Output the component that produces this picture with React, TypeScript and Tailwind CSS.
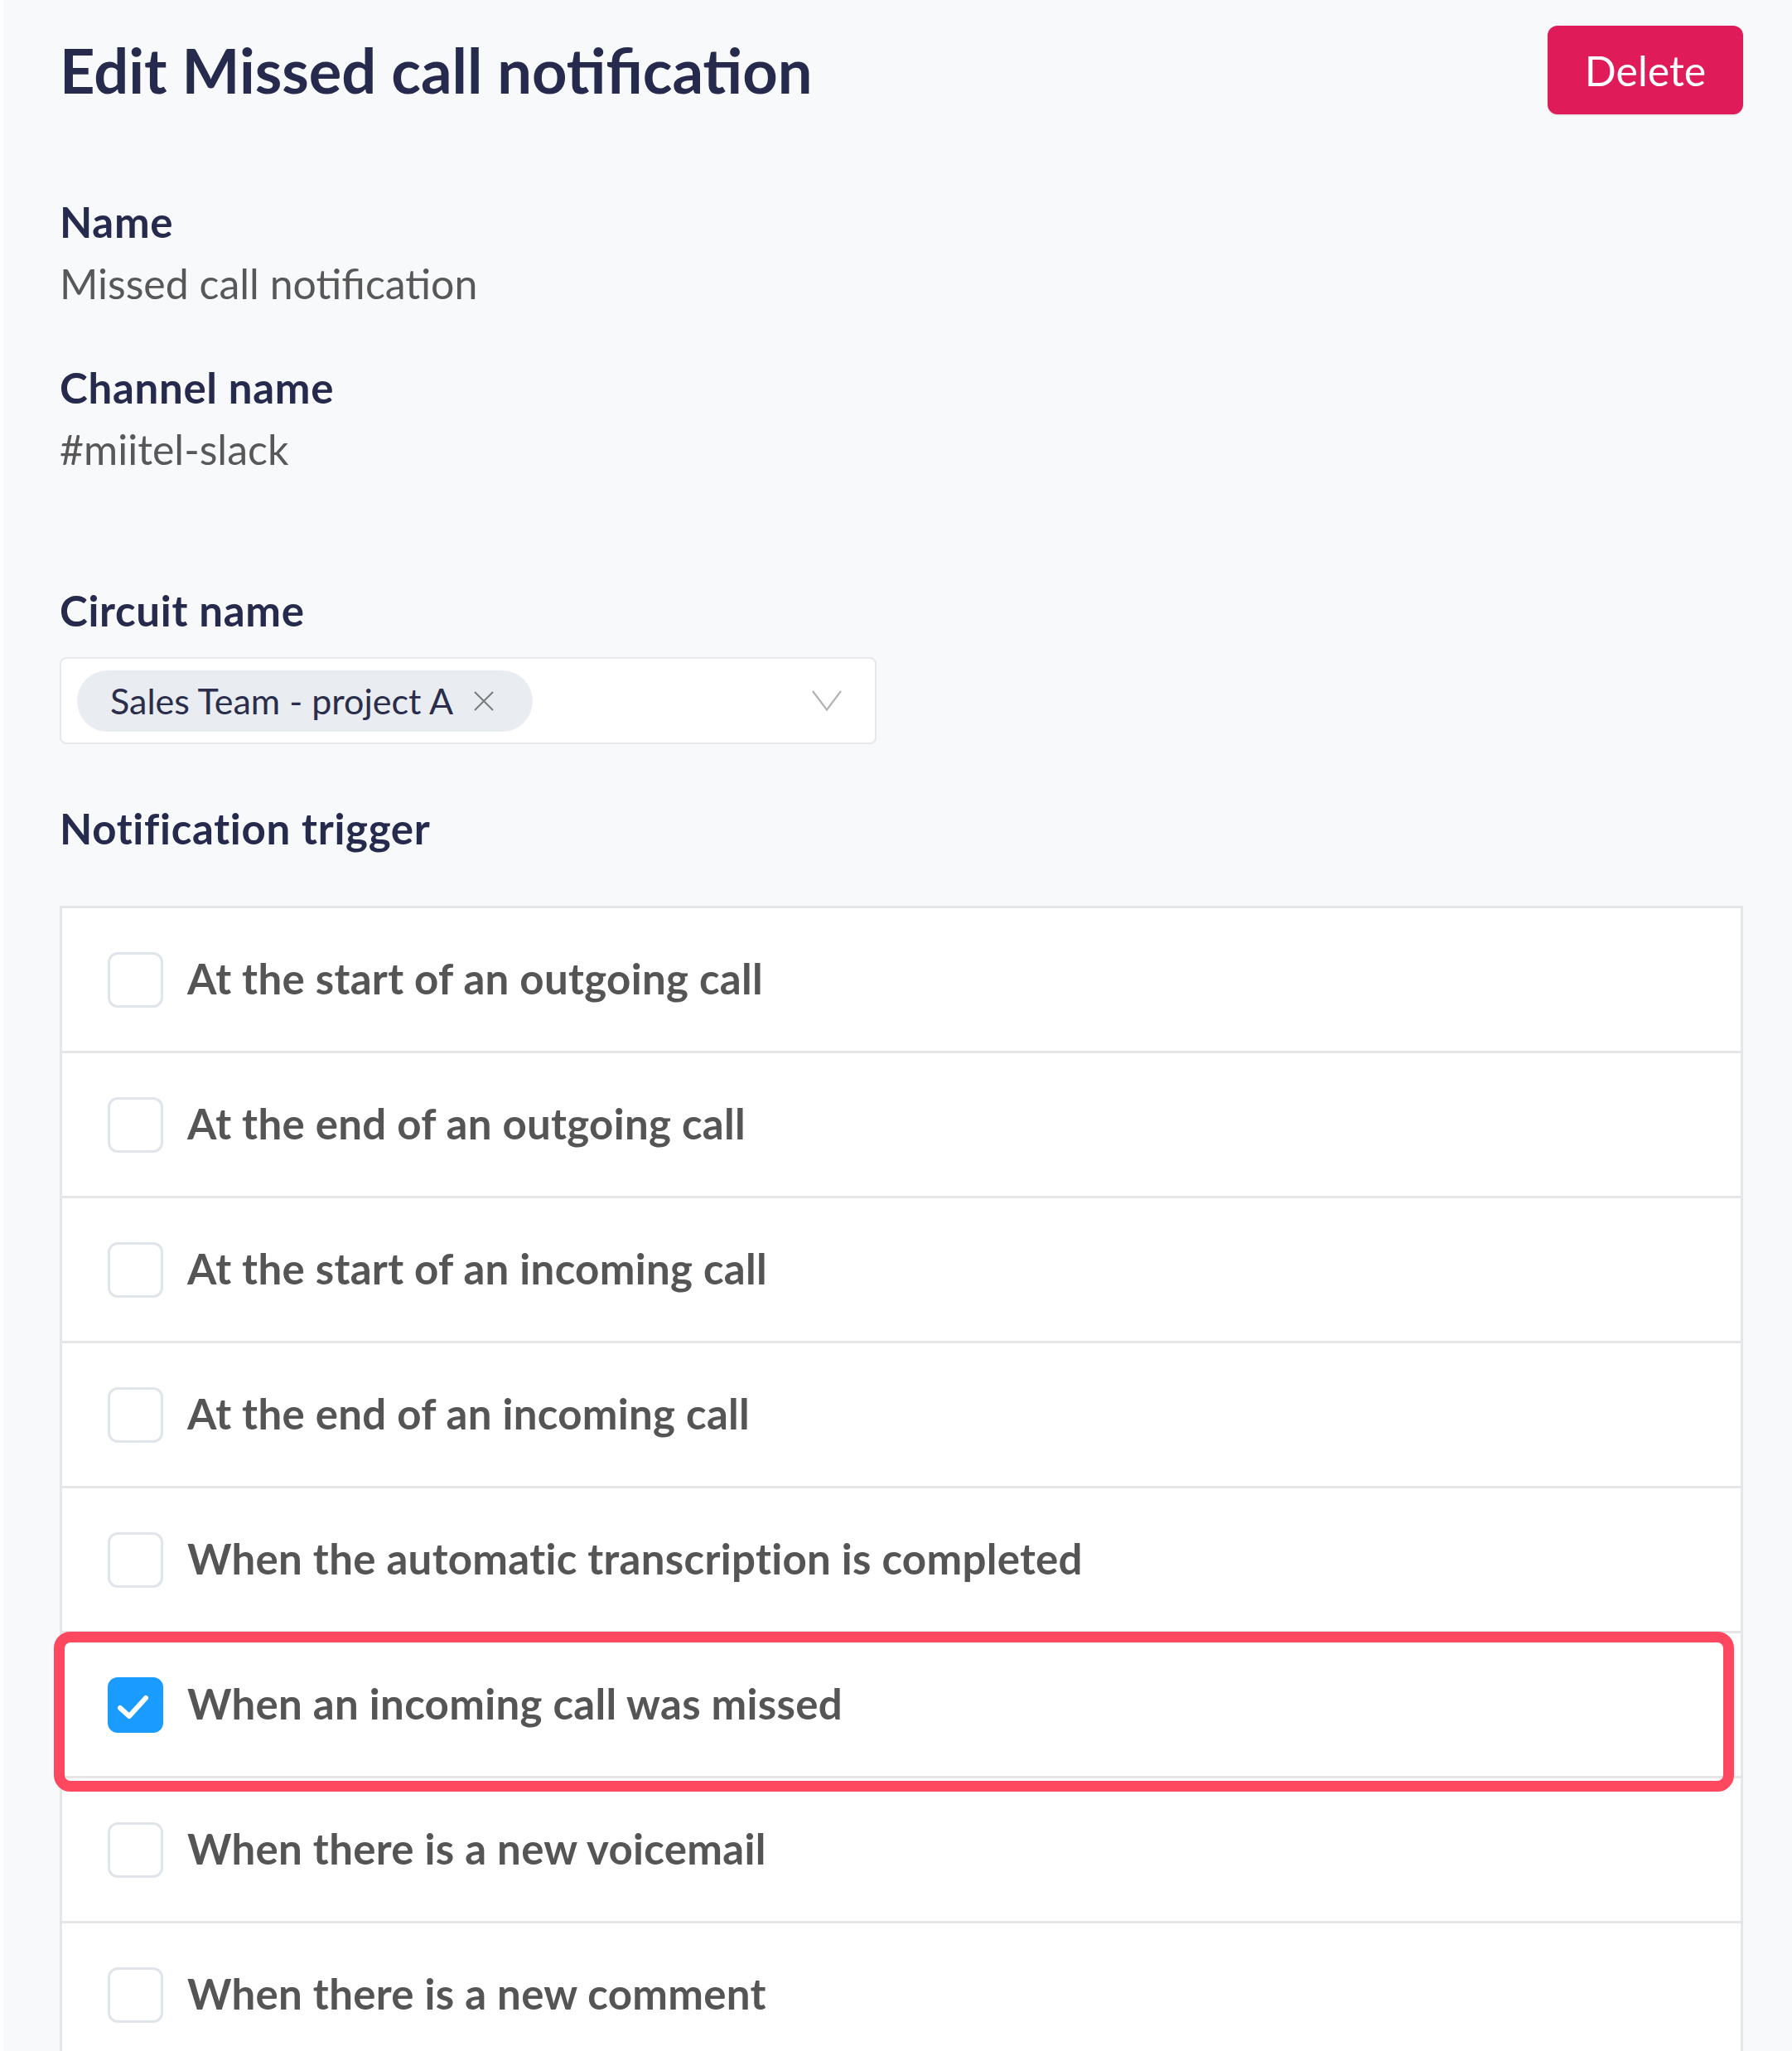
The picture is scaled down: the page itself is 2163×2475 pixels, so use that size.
import { useState } from 'react'

const triggers = [
    'At the start of an outgoing call',
    'At the end of an outgoing call',
    'At the start of an incoming call',
    'At the end of an incoming call',
    'When the automatic transcription is completed',
    'When an incoming call was missed',
    'When there is a new voicemail',
    'When there is a new comment',
]

export default function App() {
    const [checked, setChecked] = useState<number[]>([5])

    const toggle = (i: number) =>
        setChecked((prev) => (prev.includes(i) ? prev.filter((x) => x !== i) : [...prev, i]))

    return (
        <div className="min-h-[2475px] bg-[#f8f9fb] border-l-4 border-white pl-[68px] pr-[59px] pt-[31px] font-['Lato',sans-serif] overflow-hidden">
            {/* HEADER */}
            <div className="flex items-center justify-between h-[107px]">
                <h1 className="text-[74px] font-bold text-[#262a4c] leading-none">
                    Edit Missed call notification
                </h1>
                <button className="w-[236px] h-[107px] rounded-[12px] bg-[#e01b5a] text-white text-[50px] leading-none shadow-sm">
                    Delete
                </button>
            </div>

            {/* NAME */}
            <Label className="mt-[104px]">Name</Label>
            <Value>Missed call notification</Value>

            <Label className="mt-[75px]">Channel name</Label>
            <Value>#miitel-slack</Value>

            {/* CIRCUIT */}
            <Label className="mt-[144px]">Circuit name</Label>
            <div className="mt-[32px] w-[986px] h-[105px] bg-white border-2 border-[#e6e8ec] rounded-[8px] flex items-center justify-between pl-[19px] pr-[40px]">
                <div className="h-[74px] rounded-full bg-[#e9edf2] flex items-center pl-[40px] pr-[47px] gap-[25px]">
                    <span className="text-[43px] text-[#2b2e4a] leading-none">Sales Team - project A</span>
                    <svg width="24" height="24" viewBox="0 0 24 24" className="shrink-0">
                        <path d="M1 1 L23 23 M23 1 L1 23" stroke="#7a7a7a" strokeWidth="2" fill="none" />
                    </svg>
                </div>
                <svg width="36" height="25" viewBox="0 0 36 25" className="shrink-0">
                    <polyline points="1,1 18,23.5 35,1" stroke="#b3b3b3" strokeWidth="2.2" fill="none" />
                </svg>
            </div>

            <Label className="mt-[76px]">Notification trigger</Label>

            {/* TRIGGERS */}
            <div className="relative mt-[69px] bg-white border-[3px] border-[#e6e6e6] border-b-0">
                {triggers.map((t, i) => (
                    <div
                        key={t}
                        onClick={() => toggle(i)}
                        className="h-[175px] flex items-center pl-[55px] gap-[29px] border-b-[3px] border-[#e6e6e6] cursor-pointer"
                    >
                        <CheckBox on={checked.includes(i)} />
                        <span className="text-[51px] font-bold text-[#555555] leading-none tracking-[0.3px] -mt-[3px]">
                            {t}
                        </span>
                    </div>
                ))}

                {/* resaltado */}
                <div className="absolute left-[-10px] top-[873px] w-[2028px] h-[193px] border-[13px] border-[#fe4860] rounded-[20px] pointer-events-none" />
            </div>
        </div>
    )
}

function Label({ children, className = '' }: { children: React.ReactNode; className?: string }) {
    return (
        <div className={`h-[50px] flex items-center text-[51px] font-bold text-[#262a4c] leading-none tracking-[0.7px] ${className}`}>
            {children}
        </div>
    )
}

function Value({ children }: { children: React.ReactNode }) {
    return (
        <div className="mt-[25px] h-[50px] flex items-center text-[50px] text-[#585858] leading-none">
            {children}
        </div>
    )
}

function CheckBox({ on }: { on: boolean }) {
    if (on) {
        return (
            <div className="w-[67px] h-[67px] shrink-0 rounded-[12px] bg-[#1a9bff] flex items-center justify-center">
                <svg width="67" height="67" viewBox="0 0 67 67">
                    <polyline points="15,37 26,47 46,25" stroke="white" strokeWidth="6" fill="none" strokeLinecap="round" strokeLinejoin="round" />
                </svg>
            </div>
        )
    }
    return <div className="w-[67px] h-[67px] shrink-0 rounded-[12px] border-[3px] border-[#e0e5ec] bg-white" />
}
